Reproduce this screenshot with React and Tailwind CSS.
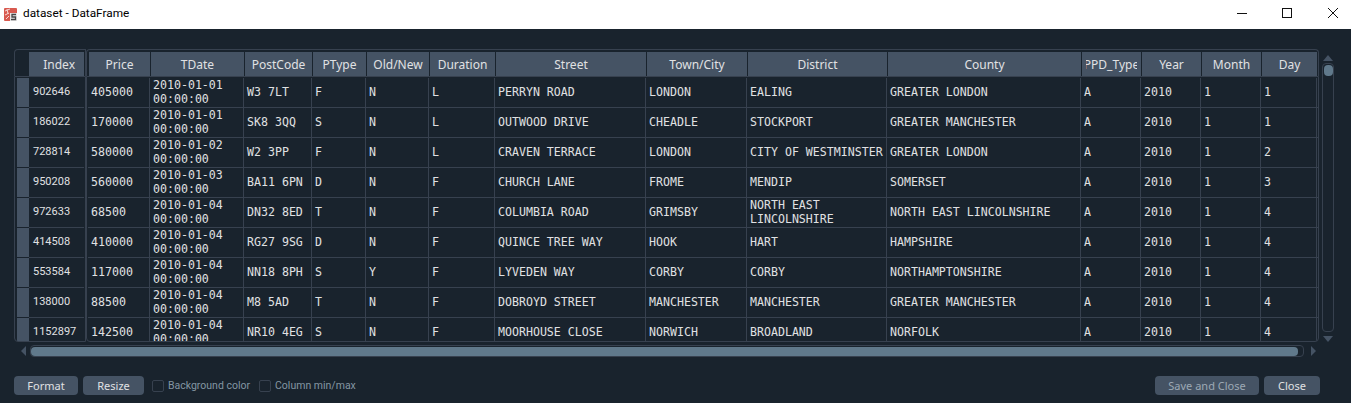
import React from "react";

const headers = ["Price", "TDate", "PostCode", "PType", "Old/New", "Duration", "Street", "Town/City", "District", "County", "PPD_Type", "Year", "Month", "Day"];

const rows = [
  ["902646", "405000", "2010-01-01 00:00:00", "W3 7LT", "F", "N", "L", "PERRYN ROAD", "LONDON", "EALING", "GREATER LONDON", "A", "2010", "1", "1"],
  ["186022", "170000", "2010-01-01 00:00:00", "SK8 3QQ", "S", "N", "L", "OUTWOOD DRIVE", "CHEADLE", "STOCKPORT", "GREATER MANCHESTER", "A", "2010", "1", "1"],
  ["728814", "580000", "2010-01-02 00:00:00", "W2 3PP", "F", "N", "L", "CRAVEN TERRACE", "LONDON", "CITY OF WESTMINSTER", "GREATER LONDON", "A", "2010", "1", "2"],
  ["950208", "560000", "2010-01-03 00:00:00", "BA11 6PN", "D", "N", "F", "CHURCH LANE", "FROME", "MENDIP", "SOMERSET", "A", "2010", "1", "3"],
  ["972633", "68500", "2010-01-04 00:00:00", "DN32 8ED", "T", "N", "F", "COLUMBIA ROAD", "GRIMSBY", "NORTH EAST LINCOLNSHIRE", "NORTH EAST LINCOLNSHIRE", "A", "2010", "1", "4"],
  ["414508", "410000", "2010-01-04 00:00:00", "RG27 9SG", "D", "N", "F", "QUINCE TREE WAY", "HOOK", "HART", "HAMPSHIRE", "A", "2010", "1", "4"],
  ["553584", "117000", "2010-01-04 00:00:00", "NN18 8PH", "S", "Y", "F", "LYVEDEN WAY", "CORBY", "CORBY", "NORTHAMPTONSHIRE", "A", "2010", "1", "4"],
  ["138000", "88500", "2010-01-04 00:00:00", "M8 5AD", "T", "N", "F", "DOBROYD STREET", "MANCHESTER", "MANCHESTER", "GREATER MANCHESTER", "A", "2010", "1", "4"],
  ["1152897", "142500", "2010-01-04 00:00:00", "NR10 4EG", "S", "N", "F", "MOORHOUSE CLOSE", "NORWICH", "BROADLAND", "NORFOLK", "A", "2010", "1", "4"],
];

const sans = "font-['Noto_Sans','Open_Sans',sans-serif]";
const roboto = "font-['Roboto',sans-serif]";
const mono = "font-['DejaVu_Sans_Mono',monospace]";
const columns = "grid grid-cols-[62px_94px_68px_54px_63px_66px_151px_101px_140px_194px_60px_60px_60px_56px]";

const Arrow = ({ points, className, viewBox }) => (
  <svg viewBox={viewBox} className={className}>
    <polygon points={points} fill="#455364" />
  </svg>
);

const SpyderIcon = () => (
  <svg viewBox="0 0 13 13" className="w-[13px] h-[13px] shrink-0">
    <rect x="0" y="0" width="13" height="13" rx="1" fill="#d8594f" />
    <path d="M1 3 L6 1 M1 7 L5 5 M2 11 L5 8 M3 1 L4 6" stroke="#f7d6d2" strokeWidth="1" fill="none" />
    <rect x="6" y="5" width="7" height="8" fill="#e8e8e8" />
    <path d="M12 6.5 H8 V9 H11.5 V11.5 H7" stroke="#444" strokeWidth="1.3" fill="none" />
  </svg>
);

const WindowControls = () => (
  <div className="flex items-center h-full pb-[3px]">
    <svg viewBox="0 0 12 12" className="w-[12px] h-[12px] mr-[33px]">
      <path d="M1 6.5 H11" stroke="#111" strokeWidth="1" fill="none" />
    </svg>
    <svg viewBox="0 0 12 12" className="w-[12px] h-[12px] mr-[34px]">
      <rect x="1.5" y="1.5" width="9" height="9" stroke="#111" strokeWidth="1" fill="none" />
    </svg>
    <svg viewBox="0 0 12 12" className="w-[12px] h-[12px] mr-[12px]">
      <path d="M1 1 L11 11 M11 1 L1 11" stroke="#111" strokeWidth="1" fill="none" />
    </svg>
  </div>
);

const Button = ({ children, width, disabled }) => (
  <button className={`h-[19px] rounded-[4px] bg-[#455364] text-[11px] leading-none ${sans} ${width} ${disabled ? "text-[#9da9b5]" : "text-[#e0e1e3]"}`}>
    {children}
  </button>
);

const Check = ({ label }) => (
  <label className={`flex items-center gap-[4px] text-[10.5px] text-[#8496a3] ${roboto}`}>
    <span className="w-[12px] h-[12px] rounded-[2px] border border-[#37414f]" />
    {label}
  </label>
);

export default function App() {
  return (
    <div className="w-[1351px] h-[403px] overflow-hidden bg-[#19232d] flex flex-col">
      {/* Title bar */}
      <div className="h-[29px] bg-white flex items-center justify-between pl-[4px]">
        <div className={`flex items-center gap-[6px] text-[11.8px] text-black ${roboto}`}>
          <SpyderIcon />
          <span className="pb-[1px]">dataset - DataFrame</span>
        </div>
        <WindowControls />
      </div>

      {/* Table + vertical scrollbar */}
      <div className="flex pl-[14px] pt-[20px] h-[314px]">
        <div className="w-[72px] shrink-0 flex flex-col">
          <div className="h-[27px] border border-b-0 border-[#37414f] rounded-tl-[4px] pt-[2px] pl-[14px] pr-[1px]">
            <div className={`h-[24px] bg-[#455364] pt-[2px] flex items-center justify-end pr-[9px] text-[12px] text-[#e0e1e3] ${sans}`}>Index</div>
          </div>
          <div className="h-[266px] border border-[#37414f] rounded-bl-[4px] pl-[2px] pt-[1px] overflow-hidden">
            {rows.map((row) => (
              <div key={row[0]} className="h-[30px] flex">
                <div className="w-[12px] h-[29px] bg-[#455364]" />
                <div className={`flex-1 h-[30px] border-b border-[#37414f] mr-[1px] pl-[4px] flex items-center text-[11px] text-[#e0e1e3] ${roboto}`}>{row[0]}</div>
              </div>
            ))}
          </div>
        </div>

        <div className="w-[1233px] shrink-0 flex flex-col">
          <div className="h-[27px] border border-b-0 border-[#37414f] rounded-t-[4px] pt-[2px] pl-[2px] pr-[1px]">
            <div className={`${columns} h-[24px]`}>
              {headers.map((h) => (
                <div key={h} className={`bg-[#455364] border-r border-[#19232d] px-[4px] pt-[2px] flex items-center text-[12px] text-[#e0e1e3] ${sans}`}>
                  <div className="w-full overflow-hidden whitespace-nowrap flex justify-center">{h}</div>
                </div>
              ))}
            </div>
          </div>
          <div className="h-[266px] border border-[#37414f] rounded-b-[4px] pl-[1px] pt-[1px] overflow-hidden">
            {rows.map((row) => (
              <div key={row[0]} className={`${columns} h-[30px] pr-[1px] border-b border-[#37414f]`}>
                {row.slice(1).map((cell, i) => (
                  <div key={i} className="h-[29px] border-r border-[#37414f] pl-[3px] pr-[1px] pb-[1px] flex items-center overflow-hidden">
                    <span className={`text-[11.6px] leading-[14px] text-[#e0e1e3] ${mono}`}>{cell}</span>
                  </div>
                ))}
              </div>
            ))}
          </div>
        </div>

        <div className="w-[12px] ml-[3px] pt-[6px] h-[293px] flex flex-col items-center">
          <Arrow viewBox="0 0 10 6" points="0,6 5,0 10,6" className="w-[10px] h-[6px] shrink-0" />
          <div className="flex-1 w-[12px] mt-[2px] border border-[#37414f] rounded-[4px] overflow-hidden">
            <div className="ml-[0.5px] w-[9px] h-[11px] mt-[1px] rounded-[4px] bg-[#60798b]" />
          </div>
          <Arrow viewBox="0 0 10 6" points="0,0 10,0 5,6" className="w-[10px] h-[6px] mt-[4px] shrink-0" />
        </div>
      </div>

      {/* Horizontal scrollbar */}
      <div className="flex items-center h-[12px] mt-[2px] pl-[21px]">
        <Arrow viewBox="0 0 5 10" points="5,0 5,10 0,5" className="w-[5px] h-[10px] shrink-0" />
        <div className="ml-[4px] w-[1274px] h-[12px] border border-[#37414f] rounded-[4px] py-[0.5px]">
          <div className="w-[1267px] h-full rounded-[4px] bg-[#60798b]" />
        </div>
        <Arrow viewBox="0 0 5 10" points="0,0 5,5 0,10" className="ml-[7px] w-[5px] h-[10px] shrink-0" />
      </div>

      {/* Bottom buttons */}
      <div className="flex items-center justify-between pl-[14px] pr-[31px] mt-[19px]">
        <div className="flex items-center">
          <Button width="w-[64px]">Format</Button>
          <div className="w-[5px]" />
          <Button width="w-[61px]">Resize</Button>
          <div className="w-[8px]" />
          <Check label="Background color" />
          <div className="w-[9px]" />
          <Check label="Column min/max" />
        </div>
        <div className="flex items-center gap-[5px]">
          <Button width="w-[104px]" disabled>Save and Close</Button>
          <Button width="w-[56px]">Close</Button>
        </div>
      </div>
    </div>
  );
}
